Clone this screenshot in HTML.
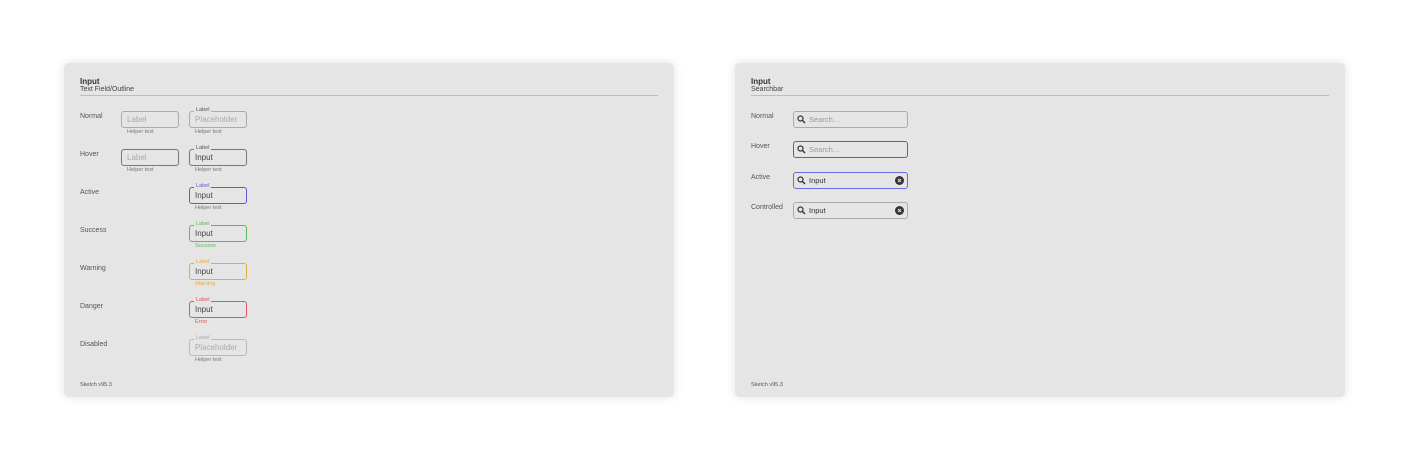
<!DOCTYPE html>
<html><head><meta charset="utf-8"><style>
*{margin:0;padding:0;box-sizing:border-box}
body{width:1408px;height:462px;background:#fff;position:relative;overflow:hidden;font-family:"Liberation Sans","DejaVu Sans",sans-serif;color:#444}
.p{position:absolute;top:63px;width:610px;height:334px;background:#e5e5e5;border-radius:5px;box-shadow:0 0 10px rgba(0,0,0,.12)}
.t{position:absolute;left:16px;top:14px;font-size:8px;font-weight:bold;color:#333}
.s{position:absolute;left:16px;top:23px;font-size:7px;color:#444}
.ln{position:absolute;left:16px;right:16px;top:32px;height:1px;background:#bdbdbd}
.r{position:absolute;left:16px;font-size:7px;color:#555;margin-top:1px}
.f{position:absolute;width:58px;height:17px;border:1px solid #aaa;border-radius:3px}
.f .v{position:absolute;left:5px;top:3px;font-size:8px;color:#444}
.f .ph{color:#aaa}
.f .lb{position:absolute;left:4px;top:-5px;font-size:5.5px;background:#e5e5e5;padding:0 2px;color:#555;line-height:7px}
.h{position:absolute;font-size:5.5px;color:#777;margin-top:1px}
.sb{position:absolute;left:58px;width:115px;height:17px;border:1px solid #aaa;border-radius:3px}
.sb svg.q{position:absolute;left:3px;top:3px}
.sb .v{position:absolute;left:15px;top:3px;font-size:7.5px;color:#333}
.sb .ph{color:#999}
.sb svg.x{position:absolute;right:3px;top:3px}
.ft{position:absolute;left:16px;top:319px;font-size:5.5px;color:#555}
</style></head><body>

<div class="p" style="left:64px">
<div class="t">Input</div><div class="s">Text Field/Outline</div><div class="ln"></div>

<div class="r" style="top:49px">Normal</div>
<div class="f" style="left:57px;top:48px"><span class="v ph">Label</span></div>
<div class="h" style="left:63px;top:65px">Helper text</div>
<div class="f" style="left:125px;top:48px"><span class="lb">Label</span><span class="v ph">Placeholder</span></div>
<div class="h" style="left:131px;top:65px">Helper text</div>

<div class="r" style="top:87px">Hover</div>
<div class="f" style="left:57px;top:86px;border-color:#777"><span class="v ph">Label</span></div>
<div class="h" style="left:63px;top:103px">Helper text</div>
<div class="f" style="left:125px;top:86px;border-color:#777"><span class="lb">Label</span><span class="v">Input</span></div>
<div class="h" style="left:131px;top:103px">Helper text</div>

<div class="r" style="top:125px">Active</div>
<div class="f" style="left:125px;top:124px;border:1.5px solid #5b5bd6"><span class="lb" style="color:#5b5bd6">Label</span><span class="v">Input</span></div>
<div class="h" style="left:131px;top:141px">Helper text</div>

<div class="r" style="top:163px">Success</div>
<div class="f" style="left:125px;top:162px;border-color:#5cb85c"><span class="lb" style="color:#5cb85c">Label</span><span class="v">Input</span></div>
<div class="h" style="left:131px;top:179px;color:#5cb85c">Success</div>

<div class="r" style="top:201px">Warning</div>
<div class="f" style="left:125px;top:200px;border-color:#f0a830"><span class="lb" style="color:#f0a830">Label</span><span class="v">Input</span></div>
<div class="h" style="left:131px;top:217px;color:#f0a830">Warning</div>

<div class="r" style="top:239px">Danger</div>
<div class="f" style="left:125px;top:238px;border-color:#e05555"><span class="lb" style="color:#e05555">Label</span><span class="v">Input</span></div>
<div class="h" style="left:131px;top:255px;color:#e05555">Error</div>

<div class="r" style="top:277px">Disabled</div>
<div class="f" style="left:125px;top:276px;border-color:#bbb"><span class="lb" style="color:#aaa">Label</span><span class="v ph">Placeholder</span></div>
<div class="h" style="left:131px;top:293px">Helper text</div>

<div class="ft">Sketch v95.3</div>
</div>

<div class="p" style="left:735px">
<div class="t">Input</div><div class="s">Searchbar</div><div class="ln"></div>

<div class="r" style="top:49px">Normal</div>
<div class="sb" style="top:48px"><svg class="q" width="9" height="9" viewBox="0 0 9 9"><circle cx="3.5" cy="3.5" r="2.5" fill="none" stroke="#333" stroke-width="1.2"/><path d="M5.3 5.3L8 8" stroke="#333" stroke-width="1.4"/></svg><span class="v ph">Search…</span></div>

<div class="r" style="top:79px">Hover</div>
<div class="sb" style="top:78px;border-color:#666"><svg class="q" width="9" height="9" viewBox="0 0 9 9"><circle cx="3.5" cy="3.5" r="2.5" fill="none" stroke="#333" stroke-width="1.2"/><path d="M5.3 5.3L8 8" stroke="#333" stroke-width="1.4"/></svg><span class="v ph">Search…</span></div>

<div class="r" style="top:110px">Active</div>
<div class="sb" style="top:109px;border:1.5px solid #6b6be0"><svg class="q" width="9" height="9" viewBox="0 0 9 9"><circle cx="3.5" cy="3.5" r="2.5" fill="none" stroke="#333" stroke-width="1.2"/><path d="M5.3 5.3L8 8" stroke="#333" stroke-width="1.4"/></svg><span class="v">Input</span><svg class="x" width="9" height="9" viewBox="0 0 9 9"><circle cx="4.5" cy="4.5" r="4.5" fill="#333"/><path d="M3 3L6 6M6 3L3 6" stroke="#ddd" stroke-width="1.1"/></svg></div>

<div class="r" style="top:140px">Controlled</div>
<div class="sb" style="top:139px"><svg class="q" width="9" height="9" viewBox="0 0 9 9"><circle cx="3.5" cy="3.5" r="2.5" fill="none" stroke="#333" stroke-width="1.2"/><path d="M5.3 5.3L8 8" stroke="#333" stroke-width="1.4"/></svg><span class="v">Input</span><svg class="x" width="9" height="9" viewBox="0 0 9 9"><circle cx="4.5" cy="4.5" r="4.5" fill="#333"/><path d="M3 3L6 6M6 3L3 6" stroke="#ddd" stroke-width="1.1"/></svg></div>

<div class="ft">Sketch v95.3</div>
</div>
</body></html>
